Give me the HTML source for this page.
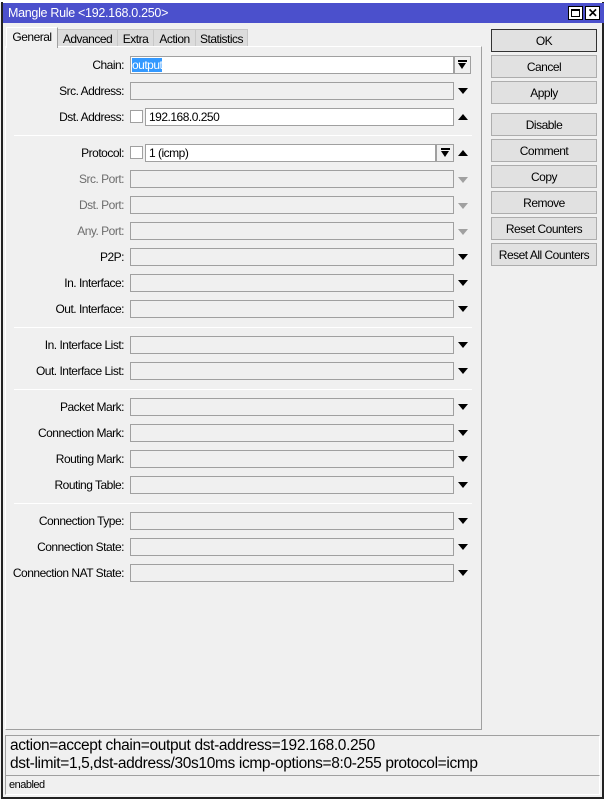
<!DOCTYPE html>
<html><head><meta charset="utf-8"><style>
*{margin:0;padding:0;box-sizing:border-box}
body{width:604px;height:799px;background:#f0f0f0;position:relative;overflow:hidden;font-family:"Liberation Sans",sans-serif;font-size:12px;color:#000;letter-spacing:-0.5px}
.a{position:absolute}
.lbl{position:absolute;right:480px;text-align:right;white-space:nowrap;height:18px;line-height:19px}
.f{position:absolute;left:130px;width:324px;height:18px;border:1px solid #a0a0a0;background:#f0f0f0}
.w{background:#fff}
.tri{position:absolute;left:458px;width:0;height:0;border-left:5px solid transparent;border-right:5px solid transparent}
.dn{border-top:6px solid #000}
.up{border-bottom:6px solid #000}
.g{color:#6d6d6d}
.gt{border-top-color:#a0a0a0}
.sep{position:absolute;left:14px;width:458px;height:1px;background:#d6d6d6;border-bottom:1px solid #fff}
.btn{position:absolute;left:491px;width:106px;height:23px;border:1px solid #adadad;background:#e1e1e1;text-align:center;line-height:22px}
.tab{position:absolute;top:29px;height:18px;line-height:18px;text-align:center;background:#dcdcdc;border:1px solid #c8c8c8;border-bottom:none}
</style></head><body>
<div class="a" style="left:0;top:0;width:604px;height:3px;background:#fff"></div>
<div class="a" style="left:1px;top:2px;width:603px;height:797px;border:2px solid #222;border-top:none"></div>
<div class="a" style="left:3px;top:3px;width:601px;height:20px;background:#4b50cc;color:#fff;line-height:21px;padding-left:5px;font-size:12.5px;letter-spacing:-0.3px">Mangle Rule &lt;192.168.0.250&gt;</div>
<div class="a" style="left:568px;top:6px;width:15px;height:14px;background:#fff;border:1px solid #000"><div style="margin:2px;width:9px;height:8px;border:1px solid #000;border-top-width:2px"></div></div>
<div class="a" style="left:585px;top:6px;width:15px;height:14px;background:#fff;border:1px solid #000;font-weight:bold;font-size:12px;line-height:12px;text-align:center">✕</div>

<div class="tab" style="left:57px;width:61px">Advanced</div>
<div class="tab" style="left:117px;width:37px">Extra</div>
<div class="tab" style="left:153px;width:43px">Action</div>
<div class="tab" style="left:195px;width:53px">Statistics</div>
<div class="a" style="left:5px;top:46px;width:477px;height:684px;border:1px solid #a0a0a0;border-left-color:#fff;border-top-color:#fff"></div>
<div class="tab" style="left:6px;top:27px;width:52px;height:21px;background:#f0f0f0;border-color:#fff #a0a0a0 #f0f0f0 #fff">General</div>

<div class="lbl" style="top:56px">Chain:</div>
<div class="f w" style="top:56px"><span style="background:#3399ff;color:#fff;margin-left:1px;line-height:16px">output</span></div>
<div class="a" style="left:454px;top:56px;width:17px;height:18px;border:1px solid #a0a0a0;background:#f0f0f0"><div class="a" style="left:3px;top:3px;width:9px;height:2px;background:#000"></div><div class="a" style="left:3px;top:6px;border-left:4.5px solid transparent;border-right:4.5px solid transparent;border-top:6px solid #000"></div></div>

<div class="lbl" style="top:82px">Src. Address:</div><div class="f" style="top:82px"></div><div class="tri dn" style="top:88px"></div>
<div class="lbl" style="top:108px">Dst. Address:</div>
<div class="a" style="left:130px;top:110px;width:13px;height:13px;border:1px solid #a0a0a0;background:#fff"></div>
<div class="f w" style="top:108px;left:145px;width:309px;padding-left:3px;line-height:17px">192.168.0.250</div><div class="tri up" style="top:114px"></div>
<div class="sep" style="top:135px"></div>

<div class="lbl" style="top:144px">Protocol:</div>
<div class="a" style="left:130px;top:146px;width:13px;height:13px;border:1px solid #a0a0a0;background:#fff"></div>
<div class="f w" style="top:144px;left:145px;width:291px;padding-left:3px;line-height:17px">1 (icmp)</div>
<div class="a" style="left:436px;top:144px;width:18px;height:18px;border:1px solid #a0a0a0;background:#f0f0f0"><div class="a" style="left:4px;top:3px;width:9px;height:2px;background:#000"></div><div class="a" style="left:4px;top:6px;border-left:4.5px solid transparent;border-right:4.5px solid transparent;border-top:6px solid #000"></div></div>
<div class="tri up" style="top:150px"></div>

<div class="lbl g" style="top:170px">Src. Port:</div><div class="f" style="top:170px"></div><div class="tri dn gt" style="top:177px"></div>
<div class="lbl g" style="top:196px">Dst. Port:</div><div class="f" style="top:196px"></div><div class="tri dn gt" style="top:203px"></div>
<div class="lbl g" style="top:222px">Any. Port:</div><div class="f" style="top:222px"></div><div class="tri dn gt" style="top:229px"></div>
<div class="lbl" style="top:248px">P2P:</div><div class="f" style="top:248px"></div><div class="tri dn" style="top:254px"></div>
<div class="lbl" style="top:274px">In. Interface:</div><div class="f" style="top:274px"></div><div class="tri dn" style="top:280px"></div>
<div class="lbl" style="top:300px">Out. Interface:</div><div class="f" style="top:300px"></div><div class="tri dn" style="top:306px"></div>
<div class="sep" style="top:327px"></div>
<div class="lbl" style="top:336px">In. Interface List:</div><div class="f" style="top:336px"></div><div class="tri dn" style="top:342px"></div>
<div class="lbl" style="top:362px">Out. Interface List:</div><div class="f" style="top:362px"></div><div class="tri dn" style="top:368px"></div>
<div class="sep" style="top:389px"></div>
<div class="lbl" style="top:398px">Packet Mark:</div><div class="f" style="top:398px"></div><div class="tri dn" style="top:404px"></div>
<div class="lbl" style="top:424px">Connection Mark:</div><div class="f" style="top:424px"></div><div class="tri dn" style="top:430px"></div>
<div class="lbl" style="top:450px">Routing Mark:</div><div class="f" style="top:450px"></div><div class="tri dn" style="top:456px"></div>
<div class="lbl" style="top:476px">Routing Table:</div><div class="f" style="top:476px"></div><div class="tri dn" style="top:482px"></div>
<div class="sep" style="top:503px"></div>
<div class="lbl" style="top:512px">Connection Type:</div><div class="f" style="top:512px"></div><div class="tri dn" style="top:518px"></div>
<div class="lbl" style="top:538px">Connection State:</div><div class="f" style="top:538px"></div><div class="tri dn" style="top:544px"></div>
<div class="lbl" style="top:564px">Connection NAT State:</div><div class="f" style="top:564px"></div><div class="tri dn" style="top:570px"></div>

<div class="btn" style="top:29px;border-color:#333;background:#e1e1e1">OK</div>
<div class="btn" style="top:55px">Cancel</div>
<div class="btn" style="top:81px">Apply</div>
<div class="btn" style="top:113px">Disable</div>
<div class="btn" style="top:139px">Comment</div>
<div class="btn" style="top:165px">Copy</div>
<div class="btn" style="top:191px">Remove</div>
<div class="btn" style="top:217px">Reset Counters</div>
<div class="btn" style="top:243px">Reset All Counters</div>

<div class="a" style="left:5px;top:735px;width:595px;height:41px;border:1px solid #a0a0a0;border-right-color:#fff;border-bottom:none;padding:1px 0 0 4px;font-size:15.5px;line-height:18px;letter-spacing:-0.35px">action=accept chain=output dst-address=192.168.0.250<br>dst-limit=1,5,dst-address/30s10ms icmp-options=8:0-255 protocol=icmp</div>
<div class="a" style="left:5px;top:775px;width:595px;height:20px;border:1px solid #a0a0a0;border-right-color:#fff;border-bottom-color:#fff;padding-left:3px;line-height:19px;font-size:11px">enabled</div>
</body></html>
